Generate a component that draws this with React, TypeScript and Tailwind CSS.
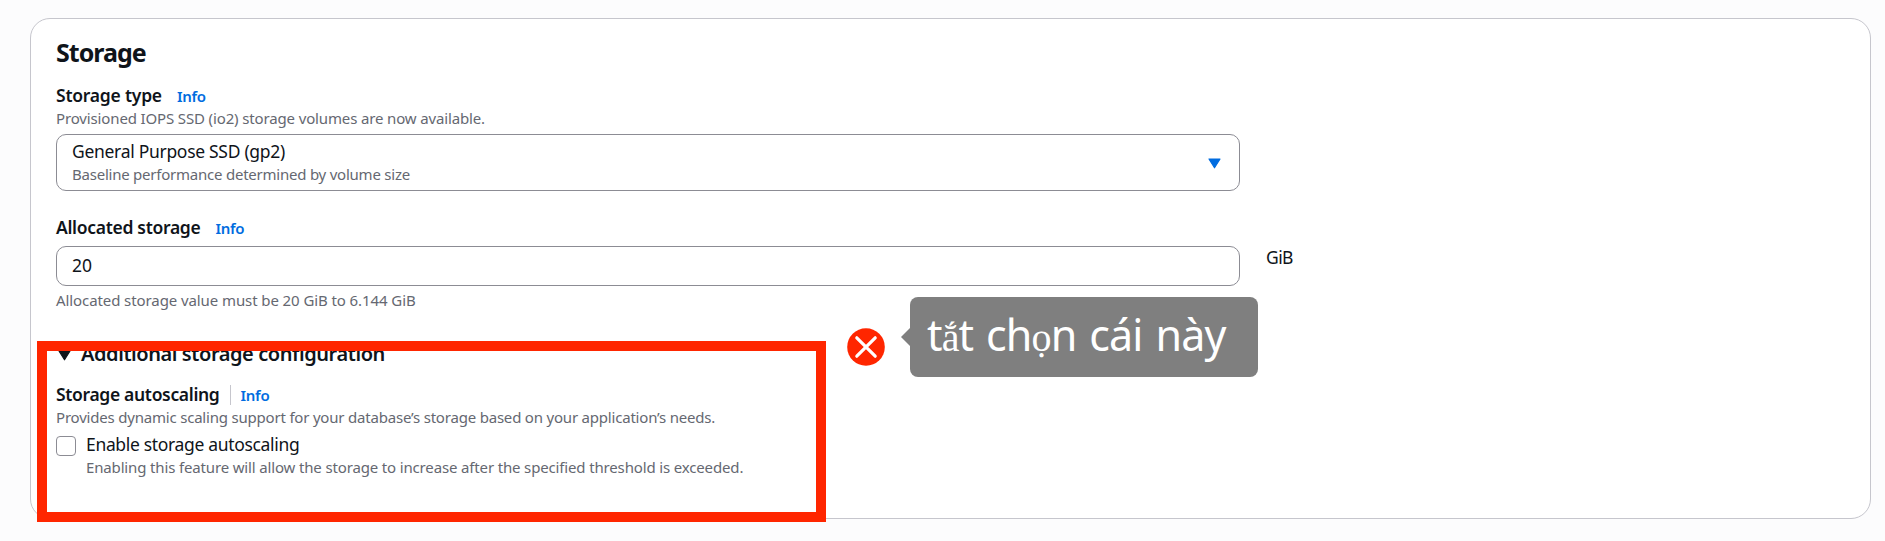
import type { ReactNode } from "react";

function InfoLink() {
  return (
    <a className="mt-px -mb-px cursor-pointer text-[15px] leading-[25px] font-semibold tracking-[-0.25px] text-[#006ce0]">
      Info
    </a>
  );
}

function Hint({ className, children }: { className: string; children: ReactNode }) {
  return <p className={`text-[15px] leading-5 whitespace-nowrap text-[#656871] ${className}`}>{children}</p>;
}

function Label({ className, children }: { className: string; children: ReactNode }) {
  return <span className={`text-[17.5px] leading-[25px] font-semibold ${className}`}>{children}</span>;
}

function Caret({ className }: { className: string }) {
  return (
    <svg viewBox="0 0 13 11" className={`h-[11px] w-[13px] shrink-0 ${className}`}>
      <path d="M1 1h11L6.5 9.8z" fill="currentColor" stroke="currentColor" strokeWidth="1.2" strokeLinejoin="round" />
    </svg>
  );
}

function StorageTypeField() {
  return (
    <div className="flex flex-col">
      <div className="flex items-center gap-[15px]">
        <Label className="tracking-[-0.23px]">Storage type</Label>
        <InfoLink />
      </div>
      <Hint className="tracking-[-0.14px]">Provisioned IOPS SSD (io2) storage volumes are now available.</Hint>
      <button className="mt-1.5 flex h-[57px] w-[1184px] items-center justify-between rounded-[10px] border border-[#8c8c94] pr-[18px] pl-[15px] text-left">
        <span className="flex flex-col pb-[3px]">
          <span className="text-[17.5px] leading-[25px] tracking-[-0.3px]">General Purpose SSD (gp2)</span>
          <span className="text-[15px] leading-5 tracking-[-0.23px] text-[#656871]">
            Baseline performance determined by volume size
          </span>
        </span>
        <Caret className="mt-px text-[#006ce0]" />
      </button>
    </div>
  );
}

function AllocatedStorageField() {
  return (
    <div className="mt-6 flex flex-col">
      <div className="flex items-center gap-[15px]">
        <Label className="tracking-[-0.3px]">Allocated storage</Label>
        <InfoLink />
      </div>
      <div className="mt-1.5 flex items-start gap-[26px]">
        <div className="flex h-10 w-[1184px] items-center rounded-[10px] border border-[#8c8c94] pb-[2px] pl-[15px] text-[17.5px] leading-[25px]">
          20
        </div>
        <span className="-mt-px text-[17.5px] leading-[25px] tracking-[-0.6px]">GiB</span>
      </div>
      <Hint className="mt-1 tracking-[-0.09px]">Allocated storage value must be 20 GiB to 6.144 GiB</Hint>
    </div>
  );
}

function AdditionalConfiguration() {
  return (
    <div className="mt-[31px] flex flex-col">
      <div className="flex h-[25px] items-center gap-2.5 pl-0.5">
        <Caret className="mt-[3px]" />
        <h3 className="text-[20px] leading-[25px] font-semibold tracking-[-0.43px]">Additional storage configuration</h3>
      </div>
      <div className="mt-4 flex items-center">
        <Label className="tracking-[-0.33px]">Storage autoscaling</Label>
        <span className="mr-[9px] ml-[11px] h-5 w-px bg-[#c6c6cd]" />
        <InfoLink />
      </div>
      <Hint className="tracking-[-0.2px]">
        Provides dynamic scaling support for your database’s storage based on your application’s needs.
      </Hint>
      <div className="mt-[5px] flex items-start gap-2.5">
        <span className="mt-1 size-5 shrink-0 rounded-[4px] border-[1.25px] border-[#8c8c94]" />
        <div className="flex flex-col">
          <span className="text-[17.5px] leading-[25px] tracking-[-0.33px]">Enable storage autoscaling</span>
          <Hint className="tracking-[-0.15px]">
            Enabling this feature will allow the storage to increase after the specified threshold is exceeded.
          </Hint>
        </div>
      </div>
    </div>
  );
}

function Annotation() {
  return (
    <>
      <div className="absolute top-[341px] left-[37px] h-[180.5px] w-[789px] border-[10px] border-[#ff2600]" />
      <svg viewBox="0 0 38 38" className="absolute top-[328px] left-[846.5px] size-[38px]">
        <circle cx="19" cy="19" r="18.8" fill="#ff2600" />
        <path d="M9.8 9.8l18.4 18.4M28.2 9.8L9.8 28.2" stroke="#fff" strokeWidth="3.2" strokeLinecap="round" />
      </svg>
      <div className="absolute top-[297px] left-[901px] flex items-center">
        <svg viewBox="0 0 9 18" className="h-[18px] w-[9px]">
          <path d="M9 0v18L0 9z" fill="#7f7f7f" />
        </svg>
        <div className="flex h-20 w-[348px] gap-[13px] rounded-[8px] bg-[#7f7f7f] pl-[17px] text-[43px] leading-[75px] tracking-[-0.9px] whitespace-nowrap text-white">
          <span>
            t<span className="font-['Liberation_Serif',serif] text-[40px]">ắ</span>t
          </span>
          <span>
            ch<span className="font-['Liberation_Serif',serif] text-[40px]">ọ</span>n
          </span>
          <span>cái</span>
          <span>này</span>
        </div>
      </div>
    </>
  );
}

export default function App() {
  return (
    <div className="relative h-[541px] w-[1885px] overflow-hidden bg-[#fcfcfd] pt-[18px] pl-[30px] font-['Noto_Sans',sans-serif] text-[#0f141a]">
      <section className="flex h-[501px] w-[1841px] flex-col rounded-[20px] border border-[#c6c6cd] bg-white pt-[18px] pl-[25px]">
        <h2 className="mb-4 text-[25px] leading-[30px] font-bold tracking-[-1px]">Storage</h2>
        <StorageTypeField />
        <AllocatedStorageField />
        <AdditionalConfiguration />
      </section>
      <Annotation />
    </div>
  );
}
